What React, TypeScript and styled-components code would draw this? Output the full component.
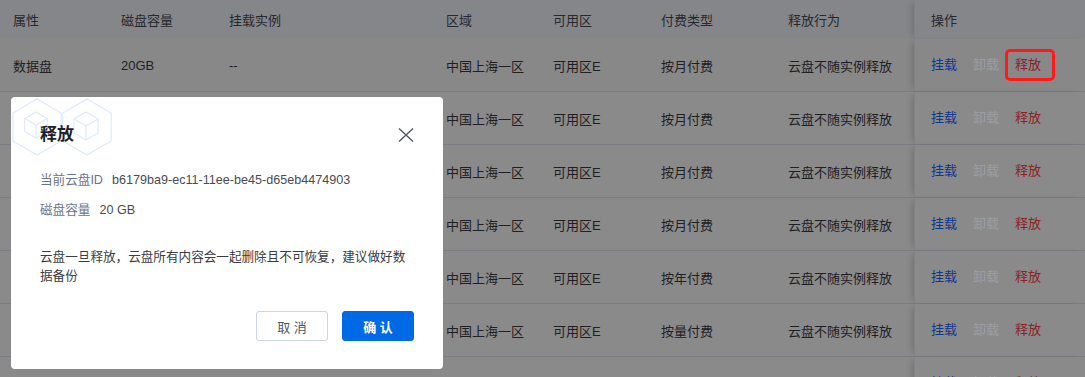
import styled, { createGlobalStyle } from "styled-components";

// the table sits behind the dialog's backdrop, so its colours are the dimmed ones
const dim = {
  page: "#8a8a8a",
  head: "#85868a",
  hover: "#888889",
  line: "#7b7d85",
  text: "#1f2024",
  headText: "#27292e",
  link: "#0d388f",
  disabled: "#9d9ea1",
  danger: "#8a2222",
};

const GlobalStyle = createGlobalStyle`
  html, body {
    margin: 0;
    padding: 0;
    background: ${dim.page};
    font-family: "Liberation Sans", "Noto Sans CJK SC", sans-serif;
    overflow: hidden;
  }
  * { box-sizing: border-box; }
`;

const COLS = "108px 108px 217px 107px 108px 127px 139px 1fr";

const S_Page = styled.div`
  position: relative;
  width: 1085px;
  height: 377px;
  overflow: hidden;
  background: ${dim.page};
`;

const S_Table = styled.div`
  display: flex;
  flex-direction: column;
  font-size: 13px;
  color: ${dim.text};
`;

const S_HeadRow = styled.div`
  display: grid;
  grid-template-columns: ${COLS};
  height: 39px;
  background: ${dim.head};
  color: ${dim.headText};
`;

const S_Row = styled.div<{ $hover?: boolean }>`
  display: grid;
  grid-template-columns: ${COLS};
  height: 53px;
  border-bottom: 1px solid ${dim.line};
  background: ${(p) => (p.$hover ? dim.hover : dim.page)};
`;

const S_Cell = styled.div`
  display: flex;
  align-items: center;
  padding-left: 13px;
  white-space: nowrap;
  overflow: hidden;
`;

const S_ActionCell = styled.div`
  display: flex;
  align-items: center;
  gap: 16px;
  padding-left: 16px;
  white-space: nowrap;
  box-shadow: -5px 0 6px -3px rgba(0, 0, 0, 0.16);
  border-left: 1px solid #818286;
`;

const S_Action = styled.span<{ $kind: "link" | "disabled" | "danger"; $marked?: boolean }>`
  position: relative;
  line-height: 20px;
  color: ${(p) =>
    p.$kind === "link" ? dim.link : p.$kind === "danger" ? dim.danger : dim.disabled};

  ${(p) =>
    p.$marked &&
    `
    &::after {
      content: "";
      position: absolute;
      top: -6px;
      bottom: -6px;
      left: -10px;
      right: -14px;
      border: 3px solid #ff1a1a;
      border-radius: 5px;
      z-index: 20;
    }
  `}
`;

const S_Dialog = styled.div`
  position: absolute;
  left: 11px;
  top: 97px;
  width: 432px;
  padding: 26px 29px 28px;
  background: #fff;
  border-radius: 4px;
  z-index: 30;
  overflow: hidden;
`;

const S_Decor = styled.svg`
  position: absolute;
  left: 0;
  top: 0;
  z-index: 0;
`;

const S_DialogHead = styled.div`
  position: relative;
  z-index: 1;
  display: flex;
  align-items: center;
  justify-content: space-between;
  height: 24px;
`;

const S_Title = styled.h3`
  margin: 0;
  font-size: 17px;
  font-weight: 600;
  line-height: 24px;
  color: #1d2129;
`;

const S_Close = styled.button`
  display: flex;
  padding: 0;
  border: none;
  background: none;
  cursor: pointer;
`;

const S_InfoList = styled.div`
  display: flex;
  flex-direction: column;
  gap: 10px;
  margin-top: 23px;
  font-size: 12.6px;
  line-height: 20px;
`;

const S_InfoRow = styled.div`
  display: flex;
`;

const S_Label = styled.span`
  color: #6b7589;
  margin-right: 9px;
`;

const S_Value = styled.span`
  color: #4a4c52;
`;

const S_Warning = styled.p`
  margin: 28px 0 0;
  font-size: 12.6px;
  line-height: 19px;
  color: #3a3c42;
`;

const S_Footer = styled.div`
  display: flex;
  justify-content: flex-end;
  gap: 14px;
  margin-top: 25px;
`;

const S_Button = styled.button<{ $primary?: boolean }>`
  width: 72px;
  height: 30px;
  padding: 0;
  border-radius: 3px;
  font-family: inherit;
  font-size: 13px;
  cursor: pointer;
  border: 1px solid ${(p) => (p.$primary ? "#006ae6" : "#cbd5e6")};
  background: ${(p) => (p.$primary ? "#006ae6" : "#fff")};
  color: ${(p) => (p.$primary ? "#fff" : "#4e5969")};
  font-weight: ${(p) => (p.$primary ? 600 : 400)};
`;

const rows = [
  { pay: "按月付费", hover: true },
  { pay: "按月付费" },
  { pay: "按月付费" },
  { pay: "按月付费" },
  { pay: "按年付费" },
  { pay: "按量付费" },
  { pay: "按月付费" },
];

const hex = (cx: number, cy: number, r: number) => {
  const pts = [0, 60, 120, 180, 240, 300].map((a) => {
    const rad = ((a - 90) * Math.PI) / 180;
    return `${(cx + r * Math.cos(rad)).toFixed(1)},${(cy + r * Math.sin(rad)).toFixed(1)}`;
  });
  return pts.join(" ");
};

const Cube = ({ cx, cy, r }: { cx: number; cy: number; r: number }) => {
  const w = r * Math.cos(Math.PI / 6);
  return (
    <g>
      <polygon points={hex(cx, cy, r)} />
      <polyline points={`${cx - w},${cy - r / 2} ${cx},${cy} ${cx + w},${cy - r / 2}`} />
      <line x1={cx} y1={cy} x2={cx} y2={cy + r} />
    </g>
  );
};

const Decor = () => (
  <S_Decor width="120" height="64" viewBox="0 0 120 64" fill="none" stroke="#e0e9fa" strokeWidth="1.2">
    <polygon points={hex(26, 30, 28)} />
    <polygon points={hex(76, 30, 28)} />
    <Cube cx={25} cy={28} r={13} />
    <Cube cx={75} cy={29} r={14} />
  </S_Decor>
);

const App = () => {
  return (
    <S_Page>
      <GlobalStyle />
      <S_Table>
        <S_HeadRow>
          <S_Cell>属性</S_Cell>
          <S_Cell>磁盘容量</S_Cell>
          <S_Cell>挂载实例</S_Cell>
          <S_Cell>区域</S_Cell>
          <S_Cell>可用区</S_Cell>
          <S_Cell>付费类型</S_Cell>
          <S_Cell>释放行为</S_Cell>
          <S_ActionCell>操作</S_ActionCell>
        </S_HeadRow>
        {rows.map((r, i) => (
          <S_Row key={i} $hover={r.hover}>
            <S_Cell>数据盘</S_Cell>
            <S_Cell>20GB</S_Cell>
            <S_Cell>--</S_Cell>
            <S_Cell>中国上海一区</S_Cell>
            <S_Cell>可用区E</S_Cell>
            <S_Cell>{r.pay}</S_Cell>
            <S_Cell>云盘不随实例释放</S_Cell>
            <S_ActionCell>
              <S_Action $kind="link">挂载</S_Action>
              <S_Action $kind="disabled">卸载</S_Action>
              <S_Action $kind="danger" $marked={i === 0}>
                释放
              </S_Action>
            </S_ActionCell>
          </S_Row>
        ))}
      </S_Table>

      <S_Dialog>
        <Decor />
        <S_DialogHead>
          <S_Title>释放</S_Title>
          <S_Close aria-label="关闭">
            <svg width="16" height="16" viewBox="0 0 16 16" fill="none" stroke="#4e5969" strokeWidth="1.4">
              <path d="M1 1.5 L15 14.5 M15 1.5 L1 14.5" />
            </svg>
          </S_Close>
        </S_DialogHead>
        <S_InfoList>
          <S_InfoRow>
            <S_Label>当前云盘ID</S_Label>
            <S_Value>b6179ba9-ec11-11ee-be45-d65eb4474903</S_Value>
          </S_InfoRow>
          <S_InfoRow>
            <S_Label>磁盘容量</S_Label>
            <S_Value>20 GB</S_Value>
          </S_InfoRow>
        </S_InfoList>
        <S_Warning>云盘一旦释放，云盘所有内容会一起删除且不可恢复，建议做好数据备份</S_Warning>
        <S_Footer>
          <S_Button>取 消</S_Button>
          <S_Button $primary>确 认</S_Button>
        </S_Footer>
      </S_Dialog>
    </S_Page>
  );
};

export default App;
